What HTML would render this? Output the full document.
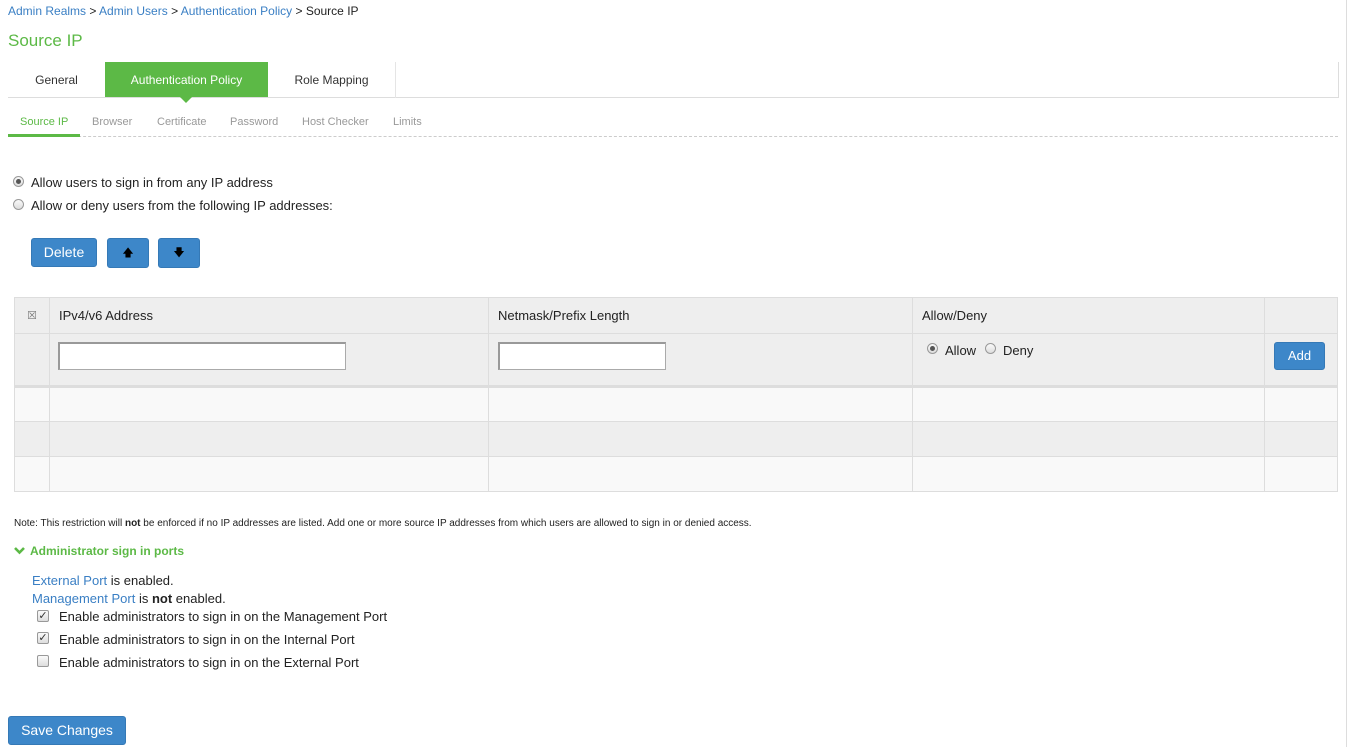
<!DOCTYPE html>
<html><head><style>
body{margin:0;background:#fff;font-family:"Liberation Sans",Arial,sans-serif;color:#222;width:1350px;height:747px;position:relative;overflow:hidden}
.a{position:absolute}
a{color:#3a7fc4;text-decoration:none}
.btn{position:absolute;background:#3d87c9;border:1px solid #3579b6;border-radius:3px;color:#fff;box-sizing:border-box;text-align:center}
.radio{position:absolute;width:11px;height:11px;border:1px solid #999;border-radius:50%;background:linear-gradient(#fafafa,#ddd);box-sizing:border-box}
.radio.on::after{content:"";position:absolute;left:2px;top:2px;width:5px;height:5px;border-radius:50%;background:#555}
.cb{position:absolute;width:12px;height:12px;border:1px solid #999;border-radius:2px;background:linear-gradient(#fafafa,#ddd);box-sizing:border-box;font-size:11px;line-height:10px;text-align:center;color:#333}
table{position:absolute;left:14px;top:297px;border-collapse:collapse;font-size:13px}
td{border:1px solid #ddd;padding:0}
.inp{position:absolute;background:#fff;border:1px solid #aaa;border-top:2px solid #999;border-left:2px solid #999;box-sizing:border-box;height:28px}
</style></head><body>
<div class="a" style="left:8px;top:4px;font-size:12px"><a>Admin Realms</a> &gt; <a>Admin Users</a> &gt; <a>Authentication Policy</a> &gt; Source IP</div>
<div class="a" style="left:8px;top:31px;font-size:17px;color:#5cb946">Source IP</div>
<div class="a" style="left:8px;top:97px;width:1330px;height:1px;background:#ddd"></div>
<div class="a" style="left:1338px;top:62px;width:1px;height:36px;background:#ddd"></div>
<div class="a" style="left:395px;top:62px;width:1px;height:36px;background:#e5e5e5"></div>
<div class="a" style="left:8px;top:63px;width:97px;height:35px;line-height:35px;text-align:center;font-size:12px;color:#333">General</div>
<div class="a" style="left:105px;top:62px;width:163px;height:35px;line-height:37px;text-align:center;font-size:12px;color:#fff;background:#5cb946">Authentication Policy</div>
<div class="a" style="left:180px;top:97px;width:0;height:0;border-left:6px solid transparent;border-right:6px solid transparent;border-top:6px solid #5cb946"></div>
<div class="a" style="left:268px;top:63px;width:127px;height:35px;line-height:35px;text-align:center;font-size:12px;color:#333">Role Mapping</div>
<div class="a" style="top:116px;left:20px;font-size:11px;color:#5cb946">Source IP</div>
<div class="a" style="top:116px;left:92px;font-size:11px;color:#999">Browser</div>
<div class="a" style="top:116px;left:157px;font-size:11px;color:#999">Certificate</div>
<div class="a" style="top:116px;left:230px;font-size:11px;color:#999">Password</div>
<div class="a" style="top:116px;left:302px;font-size:11px;color:#999">Host Checker</div>
<div class="a" style="top:116px;left:393px;font-size:11px;color:#999">Limits</div>
<div class="a" style="left:8px;top:136px;width:1330px;border-top:1px dashed #ccc"></div>
<div class="a" style="left:8px;top:134px;width:72px;height:3px;background:#5cb946"></div>
<div class="radio on" style="left:13px;top:176px"></div>
<div class="a" style="left:31px;top:175px;font-size:13px">Allow users to sign in from any IP address</div>
<div class="radio" style="left:13px;top:199px"></div>
<div class="a" style="left:31px;top:198px;font-size:13px">Allow or deny users from the following IP addresses:</div>
<div class="btn" style="left:31px;top:238px;width:66px;height:29px;line-height:27px;font-size:14px">Delete</div>
<div class="btn" style="left:107px;top:238px;width:42px;height:30px;line-height:28px;font-size:11px;color:#000">&#129093;</div>
<div class="btn" style="left:158px;top:238px;width:42px;height:30px;line-height:28px;font-size:11px;color:#000">&#129095;</div>
<table>
<tr style="background:#eee;height:36px"><td style="width:34px;text-align:center;color:#777;font-size:11px">&#9746;</td><td style="width:429px;padding-left:9px">IPv4/v6 Address</td><td style="width:414px;padding-left:9px">Netmask/Prefix Length</td><td style="width:342px;padding-left:9px">Allow/Deny</td><td style="width:72px"></td></tr>
<tr style="background:#eee;height:53px;border-bottom:3px solid #ddd"><td></td><td></td><td></td><td></td><td></td></tr>
<tr style="background:#f9f9f9;height:35px"><td></td><td></td><td></td><td></td><td></td></tr>
<tr style="background:#eee;height:35px"><td></td><td></td><td></td><td></td><td></td></tr>
<tr style="background:#f9f9f9;height:35px"><td></td><td></td><td></td><td></td><td></td></tr>
</table>
<div class="inp" style="left:58px;top:342px;width:288px"></div>
<div class="inp" style="left:498px;top:342px;width:168px"></div>
<div class="radio on" style="left:927px;top:343px"></div>
<div class="a" style="left:945px;top:343px;font-size:13px">Allow</div>
<div class="radio" style="left:985px;top:343px"></div>
<div class="a" style="left:1003px;top:343px;font-size:13px">Deny</div>
<div class="btn" style="left:1274px;top:342px;width:51px;height:28px;line-height:26px;font-size:13px">Add</div>
<div class="a" style="left:14px;top:518px;font-size:10px">Note: This restriction will <b>not</b> be enforced if no IP addresses are listed. Add one or more source IP addresses from which users are allowed to sign in or denied access.</div>
<svg class="a" style="left:14px;top:546px" width="11" height="9" viewBox="0 0 11 9"><path d="M1 2 L5.5 6.5 L10 2" fill="none" stroke="#5cb946" stroke-width="2.6"/></svg>
<div class="a" style="left:30px;top:544px;font-size:12px;font-weight:bold;color:#5cb946">Administrator sign in ports</div>
<div class="a" style="left:32px;top:573px;font-size:13px"><a>External Port</a> is enabled.</div>
<div class="a" style="left:32px;top:591px;font-size:13px"><a>Management Port</a> is <b>not</b> enabled.</div>
<div class="cb" style="left:37px;top:610px">&#10003;</div>
<div class="a" style="left:59px;top:609px;font-size:13px">Enable administrators to sign in on the Management Port</div>
<div class="cb" style="left:37px;top:632px">&#10003;</div>
<div class="a" style="left:59px;top:632px;font-size:13px">Enable administrators to sign in on the Internal Port</div>
<div class="cb" style="left:37px;top:655px"></div>
<div class="a" style="left:59px;top:655px;font-size:13px">Enable administrators to sign in on the External Port</div>
<div class="btn" style="left:8px;top:716px;width:118px;height:29px;line-height:27px;font-size:14px">Save Changes</div>
<div class="a" style="left:1346px;top:0;width:1px;height:747px;background:#ddd"></div>
</body></html>
